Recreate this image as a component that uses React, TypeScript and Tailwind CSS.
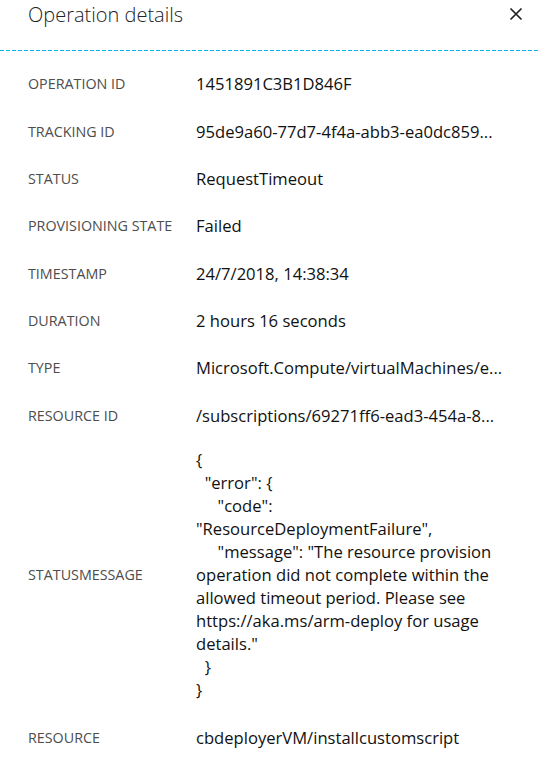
import React from "react";

const rows: { label: string; value: string }[] = [
  { label: "OPERATION ID", value: "1451891C3B1D846F" },
  { label: "TRACKING ID", value: "95de9a60-77d7-4f4a-abb3-ea0dc859..." },
  { label: "STATUS", value: "RequestTimeout" },
  { label: "PROVISIONING STATE", value: "Failed" },
  { label: "TIMESTAMP", value: "24/7/2018, 14:38:34" },
  { label: "DURATION", value: "2 hours 16 seconds" },
  { label: "TYPE", value: "Microsoft.Compute/virtualMachines/e..." },
  { label: "RESOURCE ID", value: "/subscriptions/69271ff6-ead3-454a-8..." },
];

const statusMessage = `{
  "error": {
     "code": "ResourceDeploymentFailure",
     "message": "The resource provision operation did not complete within the allowed timeout period. Please see https://aka.ms/arm-deploy for usage details."
  }
}`;

export default function App() {
  return (
    <div className="w-[540px] h-[767px] bg-white overflow-hidden font-['Open_Sans',sans-serif]">
      <div className="h-[50px] flex items-start justify-between pl-[28px] pr-[12px]">
        <div className="text-[20px] font-light text-[#222] leading-[30px]">Operation details</div>
        <button className="mt-[6px] w-[16px] h-[16px] flex items-center justify-center mr-[4px]">
          <svg width="14" height="14" viewBox="0 0 14 14">
            <path d="M1.5 1.5 L12.5 12.5 M12.5 1.5 L1.5 12.5" stroke="#222" strokeWidth="1.7" />
          </svg>
        </button>
      </div>
      <div className="h-px bg-[repeating-linear-gradient(90deg,#0ab4f0_0_4px,transparent_4px_6px)]" />
      <div className="pt-[9px] pl-[28px] pr-[36px]">
        {rows.map((r) => (
          <div key={r.label} className="flex items-center py-[12.2px]">
            <div className="w-[168px] shrink-0 text-[14.3px] text-[#4d4d4d] leading-[23px]">{r.label}</div>
            <div className="flex-1 min-w-0 whitespace-nowrap text-[16.6px] text-[#111] leading-[23px]">{r.value}</div>
          </div>
        ))}
        <div className="flex items-center pt-[9px] pb-[13px]">
          <div className="w-[168px] shrink-0 text-[14.3px] text-[#4d4d4d] leading-[23px]">STATUSMESSAGE</div>
          <div className="flex-1 min-w-0 whitespace-pre-wrap text-[16.6px] text-[#111] leading-[23px]">{statusMessage}</div>
        </div>
        <div className="flex items-center py-[12.2px]">
          <div className="w-[168px] shrink-0 text-[14.3px] text-[#4d4d4d] leading-[23px]">RESOURCE</div>
          <div className="flex-1 min-w-0 whitespace-nowrap text-[16.6px] text-[#111] leading-[23px]">cbdeployerVM/installcustomscript</div>
        </div>
      </div>
    </div>
  );
}
